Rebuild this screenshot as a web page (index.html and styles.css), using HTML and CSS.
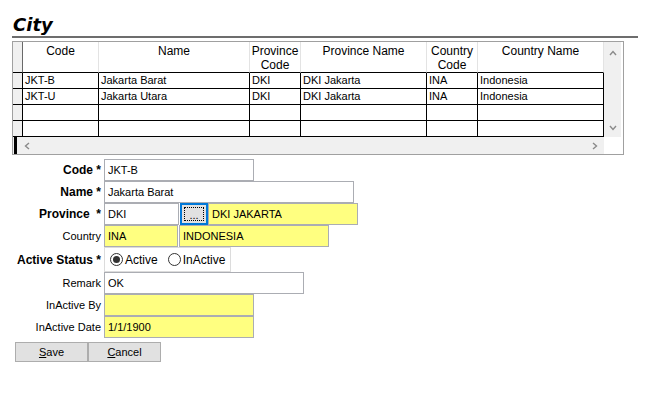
FILE: index.html
```html
<!DOCTYPE html>
<html lang="en">
<head>
  <meta charset="UTF-8">
  <title>City</title>
  <link rel="stylesheet" href="styles.css">
</head>
<body>
  <div class="page">
    <h1 class="title">City</h1>

    <div class="grid">
      <div class="grid-main">
        <div class="grid-table">
          <div class="hd rh"></div>
          <div class="hd">Code</div>
          <div class="hd">Name</div>
          <div class="hd">Province<br>Code</div>
          <div class="hd">Province Name</div>
          <div class="hd">Country<br>Code</div>
          <div class="hd">Country Name</div>

          <div class="cell rh"></div>
          <div class="cell">JKT-B</div>
          <div class="cell">Jakarta Barat</div>
          <div class="cell">DKI</div>
          <div class="cell">DKI Jakarta</div>
          <div class="cell">INA</div>
          <div class="cell">Indonesia</div>

          <div class="cell rh"></div>
          <div class="cell">JKT-U</div>
          <div class="cell">Jakarta Utara</div>
          <div class="cell">DKI</div>
          <div class="cell">DKI Jakarta</div>
          <div class="cell">INA</div>
          <div class="cell">Indonesia</div>

          <div class="cell rh"></div>
          <div class="cell"></div>
          <div class="cell"></div>
          <div class="cell"></div>
          <div class="cell"></div>
          <div class="cell"></div>
          <div class="cell"></div>

          <div class="cell rh"></div>
          <div class="cell"></div>
          <div class="cell"></div>
          <div class="cell"></div>
          <div class="cell"></div>
          <div class="cell"></div>
          <div class="cell"></div>
        </div>
        <div class="hscroll">
          <span class="marker"></span>
          <svg class="arrow" width="6" height="8" viewBox="0 0 6 8"><polyline points="5,1 1.5,4 5,7" fill="none" stroke="#8a8a8a" stroke-width="1.4"/></svg>
          <svg class="arrow right" width="6" height="8" viewBox="0 0 6 8"><polyline points="1,1 4.5,4 1,7" fill="none" stroke="#8a8a8a" stroke-width="1.4"/></svg>
        </div>
      </div>
      <div class="vscroll">
        <svg width="8" height="6" viewBox="0 0 8 6"><polyline points="1,5 4,1.5 7,5" fill="none" stroke="#8a8a8a" stroke-width="1.4"/></svg>
        <svg width="8" height="6" viewBox="0 0 8 6"><polyline points="1,1 4,4.5 7,1" fill="none" stroke="#8a8a8a" stroke-width="1.4"/></svg>
      </div>
    </div>

    <div class="form">
      <div class="row">
        <label class="lbl bold">Code *</label>
        <input class="field w150" type="text" value="JKT-B" readonly>
      </div>
      <div class="row">
        <label class="lbl bold">Name *</label>
        <input class="field w250" type="text" value="Jakarta Barat" readonly>
      </div>
      <div class="row">
        <label class="lbl bold">Province&nbsp; *</label>
        <input class="field w75" type="text" value="DKI" readonly>
        <button class="lookup" type="button"><span>...</span></button>
        <input class="field w150 ro" type="text" value="DKI JAKARTA" readonly>
      </div>
      <div class="row">
        <label class="lbl">Country</label>
        <input class="field w74 ro" type="text" value="INA" readonly>
        <input class="field w150 ro gap" type="text" value="INDONESIA" readonly>
      </div>
      <div class="row tall">
        <label class="lbl bold">Active Status *</label>
        <div class="radios">
          <span class="radio checked"></span><span class="opt">Active</span>
          <span class="radio"></span><span class="opt">InActive</span>
        </div>
      </div>
      <div class="row">
        <label class="lbl">Remark</label>
        <input class="field w200" type="text" value="OK" readonly>
      </div>
      <div class="row">
        <label class="lbl">InActive By</label>
        <input class="field w150 ro" type="text" value="" readonly>
      </div>
      <div class="row">
        <label class="lbl">InActive Date</label>
        <input class="field w150 ro" type="text" value="1/1/1900" readonly>
      </div>
    </div>

    <div class="actions">
      <button class="btn" type="button"><u>S</u>ave</button>
      <button class="btn" type="button"><u>C</u>ancel</button>
    </div>
  </div>
</body>
</html>
```

FILE: styles.css
```css
* {
  box-sizing: border-box;
}
body {
  margin: 0;
  background: #fff;
  color: #000;
  font-family: "Liberation Sans", Arial, sans-serif;
  font-size: 11px;
}
.page {
  padding: 14px 0 0 12px;
}
.title {
  margin: 0;
  width: 626px;
  height: 24px;
  padding-left: 1px;
  line-height: 22px;
  font-family: "DejaVu Sans", sans-serif;
  font-size: 18px;
  font-weight: bold;
  font-style: italic;
  border-bottom: 2px solid #6d6d6d;
}

/* data grid */
.grid {
  display: flex;
  width: 612px;
  height: 114px;
  margin-top: 3px;
  border: 1px solid #a0a0a0;
}
.grid-main {
  width: 591px;
}
.grid-table {
  display: grid;
  grid-template-columns: 10px 76px 151px 51px 126px 51px 126px;
  grid-template-rows: 31px repeat(4, 16px);
}
.hd {
  padding-top: 2px;
  line-height: 14px;
  font-size: 12px;
  text-align: center;
  border-right: 1px solid #e3e3e3;
  border-bottom: 1px solid #000;
}
.hd.rh {
  background: #f0f0f0;
  border-right-color: #696969;
}
.cell {
  padding-left: 2px;
  line-height: 15px;
  white-space: nowrap;
  overflow: hidden;
  border-right: 1px solid #000;
  border-bottom: 1px solid #000;
}
.cell.rh {
  background: #f0f0f0;
}
.hscroll {
  display: flex;
  align-items: center;
  height: 17px;
  background: #f0f0f0;
}
.marker {
  width: 3px;
  height: 17px;
  margin-left: 1px;
  background: #000;
}
.arrow {
  margin-left: 7px;
}
.arrow.right {
  margin-left: auto;
  margin-right: 6px;
}
.vscroll {
  display: flex;
  flex-direction: column;
  align-items: center;
  justify-content: space-between;
  width: 17px;
  height: 95px;
  padding: 8px 0 6px;
  background: #f0f0f0;
}

/* form */
.form {
  margin-top: 4px;
}
.row {
  display: flex;
  align-items: center;
  height: 22px;
}
.row.tall {
  height: 25px;
}
.lbl {
  width: 89px;
  margin-right: 3px;
  text-align: right;
  white-space: nowrap;
}
.lbl.bold {
  font-size: 12px;
  font-weight: bold;
}
.field {
  height: 22px;
  padding: 0 3px;
  border: 1px solid #abadb3;
  background: #fff;
  color: #000;
  font-family: "Liberation Sans", Arial, sans-serif;
  font-size: 11px;
  outline: none;
}
.field.ro {
  background: #ffff80;
}
.field.gap {
  margin-left: 1px;
}
.w74 { width: 74px; }
.w75 { width: 75px; }
.w150 { width: 150px; }
.w200 { width: 200px; }
.w250 { width: 250px; }
.lookup {
  width: 28px;
  height: 22px;
  margin-left: 1px;
  padding: 2px;
  border: 2px solid #0078d7;
  background: #e1e1e1;
  color: #000;
  font-family: "Liberation Sans", Arial, sans-serif;
  font-size: 11px;
}
.lookup span {
  display: block;
  height: 14px;
  padding-top: 1px;
  line-height: 12px;
  text-align: center;
  border: 1px dotted #000;
}
.radios {
  display: flex;
  align-items: center;
  width: 127px;
  height: 25px;
  padding-left: 5px;
  border: 1px solid #dcdcdc;
}
.radio {
  position: relative;
  flex: none;
  width: 13px;
  height: 13px;
  border: 1px solid #333;
  border-radius: 50%;
  background: #fff;
}
.radio.checked::after {
  content: "";
  position: absolute;
  left: 2px;
  top: 2px;
  width: 7px;
  height: 7px;
  border-radius: 50%;
  background: #333;
}
.opt {
  margin: 0 10px 0 2px;
  font-size: 12px;
}
.actions {
  display: flex;
  margin: 4px 0 0 3px;
}
.btn {
  width: 73px;
  height: 20px;
  padding: 0;
  border: 1px solid #adadad;
  background: #e1e1e1;
  color: #000;
  font-family: "Liberation Sans", Arial, sans-serif;
  font-size: 11px;
}
```
